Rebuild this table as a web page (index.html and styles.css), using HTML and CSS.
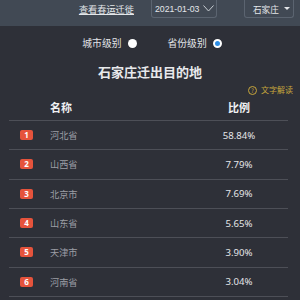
FILE: index.html
```html
<!DOCTYPE html>
<html lang="zh">
<head>
<meta charset="utf-8">
<link rel="stylesheet" href="styles.css">
</head>
<body>
<div class="page">
  <header class="topbar">
    <a class="link">查看春运迁徙</a>
    <div class="datebox">
      <span class="date">2021-01-03</span>
      <svg class="chev" width="11" height="7" viewBox="0 0 11 7"><path d="M0.5 0.5 L5.5 6 L10.5 0.5" fill="none" stroke="#c9ced4" stroke-width="1"/></svg>
    </div>
    <div class="citybox">
      <span class="city">石家庄</span>
      <span class="caret"></span>
    </div>
  </header>
  <main class="main">
    <div class="radios">
      <label class="radio">城市级别<span class="dot"></span></label>
      <label class="radio">省份级别<span class="dot on"></span></label>
    </div>
    <h1 class="title">石家庄迁出目的地</h1>
    <div class="help">
      <span class="q">?</span><span>文字解读</span>
    </div>
    <div class="table">
      <div class="row head">
        <span></span><span class="name">名称</span><span class="pct">比例</span>
      </div>
      <div class="row"><span class="badgecell"><span class="badge">1</span></span><span class="name">河北省</span><span class="pct">58.84%</span></div>
      <div class="row"><span class="badgecell"><span class="badge">2</span></span><span class="name">山西省</span><span class="pct">7.79%</span></div>
      <div class="row"><span class="badgecell"><span class="badge">3</span></span><span class="name">北京市</span><span class="pct">7.69%</span></div>
      <div class="row"><span class="badgecell"><span class="badge">4</span></span><span class="name">山东省</span><span class="pct">5.65%</span></div>
      <div class="row"><span class="badgecell"><span class="badge">5</span></span><span class="name">天津市</span><span class="pct">3.90%</span></div>
      <div class="row"><span class="badgecell"><span class="badge">6</span></span><span class="name">河南省</span><span class="pct">3.04%</span></div>
    </div>
  </main>
</div>
</body>
</html>
```
FILE: styles.css
```css
html, body {
  margin: 0;
  padding: 0;
  background: #2e3038;
  font-family: "Noto Sans", "Noto Sans CJK SC", sans-serif;
}
.page {
  width: 300px;
  height: 300px;
  overflow: hidden;
}
.topbar {
  height: 26px;
  background: #414954;
  display: flex;
  align-items: flex-start;
  justify-content: flex-end;
  padding-right: 6px;
  box-sizing: border-box;
}
.link {
  color: #e4e7ea;
  font-family: "Noto Sans CJK SC", sans-serif;
  font-size: 9.2px;
  line-height: 18px;
  text-decoration: underline;
  margin-right: 17px;
  white-space: nowrap;
}
.datebox {
  width: 66px;
  height: 18px;
  box-sizing: border-box;
  border: 1px solid #5b6470;
  border-top: none;
  border-radius: 0 0 3px 3px;
  display: flex;
  align-items: center;
  padding-left: 3px;
  padding-right: 2px;
  justify-content: space-between;
  margin-right: 27px;
  flex-shrink: 0;
}
.date {
  color: #e4e7ea;
  font-family: "Liberation Sans", sans-serif;
  font-size: 8.7px;
  line-height: 16px;
  white-space: nowrap;
}
.chev { display: block; flex-shrink: 0; }
.citybox {
  width: 50px;
  height: 18px;
  box-sizing: border-box;
  border: 1px solid #5b6470;
  border-top: none;
  border-radius: 0 0 3px 3px;
  display: flex;
  align-items: center;
  padding-left: 8px;
  flex-shrink: 0;
}
.city {
  color: #e4e7ea;
  font-family: "Noto Sans CJK SC", sans-serif;
  font-size: 8.6px;
  line-height: 16px;
  white-space: nowrap;
}
.caret {
  width: 0;
  height: 0;
  border-left: 3px solid transparent;
  border-right: 3px solid transparent;
  border-top: 3px solid #e4e7ea;
  margin-left: 5px;
}
.main {
  display: flex;
  flex-direction: column;
}
.radios {
  display: flex;
  justify-content: center;
  gap: 31px;
  padding-top: 11px;
  padding-left: 4px;
}
.radio {
  display: flex;
  align-items: center;
  color: #e2e4e8;
  font-family: "Noto Sans CJK SC", sans-serif;
  font-size: 9.8px;
  line-height: 13px;
}
.dot {
  width: 9px;
  height: 9px;
  border-radius: 50%;
  background: #ffffff;
  margin-left: 6px;
  box-sizing: border-box;
}
.dot.on {
  background: #2d8ee6;
  border: 2px solid #ffffff;
}
.title {
  margin: 14px 0 0;
  text-align: center;
  color: #e8e9ec;
  font-family: "Noto Sans CJK SC", sans-serif;
  font-size: 13px;
  line-height: 16px;
  font-weight: 700;
}
.help {
  align-self: flex-end;
  display: flex;
  align-items: center;
  color: #c7a63c;
  font-family: "Noto Sans CJK SC", sans-serif;
  font-size: 8px;
  line-height: 12px;
  margin-top: 4px;
  margin-right: 7px;
}
.q {
  width: 7px;
  height: 7px;
  border: 1px solid #c7a63c;
  border-radius: 50%;
  font-size: 6px;
  line-height: 7px;
  text-align: center;
  margin-right: 4px;
}
.table {
  margin: 0 12px 0 9px;
}
.row {
  display: grid;
  grid-template-columns: 41px 1fr 98px;
  align-items: center;
  height: 29.33px;
  box-sizing: border-box;
  border-bottom: 1px solid #4d4f57;
}
.row.head {
  height: 25px;
  padding-bottom: 2px;
}
.name {
  color: #9c9ea5;
  font-family: "Noto Sans CJK SC", sans-serif;
  font-size: 9.2px;
}
.pct {
  text-align: center;
  color: #e4e5e8;
  font-size: 9.6px;
}
.head .name, .head .pct {
  color: #f0f1f3;
  font-family: "Noto Sans CJK SC", sans-serif;
  font-size: 11px;
  font-weight: 700;
}
.badgecell {
  padding-left: 11px;
  display: flex;
}
.badge {
  width: 13px;
  height: 10px;
  border-radius: 2px;
  background: #e5533c;
  color: #ffffff;
  font-size: 8px;
  line-height: 10px;
  font-weight: 700;
  text-align: center;
}
```
